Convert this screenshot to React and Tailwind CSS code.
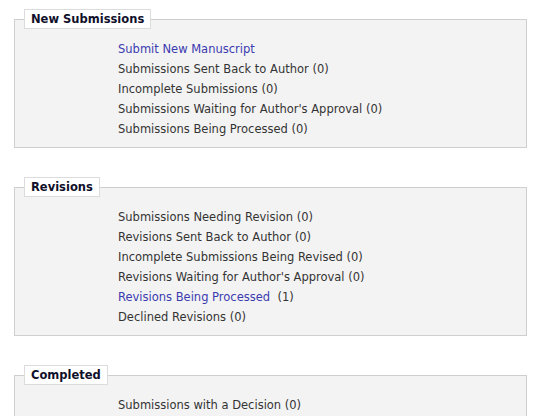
import React from 'react';

const sections = [
  {
    title: 'New Submissions',
    items: [
      { label: 'Submit New Manuscript', link: true },
      { label: 'Submissions Sent Back to Author (0)' },
      { label: 'Incomplete Submissions (0)' },
      { label: "Submissions Waiting for Author's Approval (0)" },
      { label: 'Submissions Being Processed (0)' },
    ],
  },
  {
    title: 'Revisions',
    items: [
      { label: 'Submissions Needing Revision (0)' },
      { label: 'Revisions Sent Back to Author (0)' },
      { label: 'Incomplete Submissions Being Revised (0)' },
      { label: "Revisions Waiting for Author's Approval (0)" },
      { label: 'Revisions Being Processed', link: true, count: '(1)' },
      { label: 'Declined Revisions (0)' },
    ],
  },
  {
    title: 'Completed',
    items: [{ label: 'Submissions with a Decision (0)' }],
  },
];

const Section = ({ title, items }) => (
  <fieldset className="border border-[#cfcfcf] bg-[#f3f3f3] px-[9px] pt-0 pb-[8px] mb-[29px]">
    <legend className="bg-white border border-[#dcdcdc] px-[6px] h-[20px] leading-[18px] text-[11.5px] font-bold text-[#10102a]">
      {title}
    </legend>
    <ul className="ml-[94px] pt-[10px]">
      {items.map((it) => (
        <li key={it.label} className="h-[20px] leading-[20px] text-[11.5px] text-[#333]">
          {it.link ? (
            <>
              <a href="#" className="text-[#3b3bb0]">{it.label}</a>
              {it.count && <span> &nbsp;{it.count}</span>}
            </>
          ) : (
            it.label
          )}
        </li>
      ))}
    </ul>
  </fieldset>
);

export default function App() {
  return (
    <div className="w-[554px] h-[416px] overflow-hidden bg-white pt-[9px] pl-[14px] pr-[27px] font-['DejaVu_Sans',Verdana,sans-serif]">
      {sections.map((s) => (
        <Section key={s.title} {...s} />
      ))}
    </div>
  );
}
